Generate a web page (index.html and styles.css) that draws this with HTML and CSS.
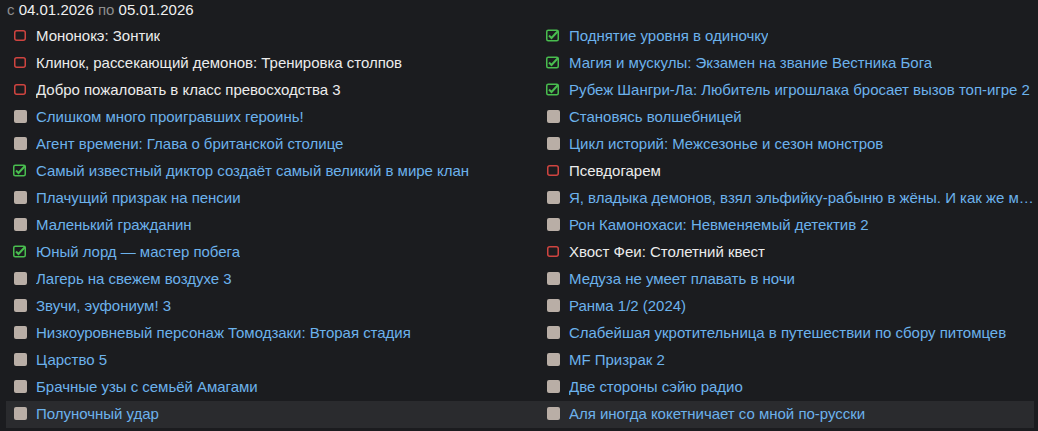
FILE: index.html
```html
<!DOCTYPE html>
<html lang="ru">
<head>
<meta charset="utf-8">
<link rel="stylesheet" href="styles.css">
</head>
<body>
<div class="page">
  <div class="range"><span class="muted">с</span> <span class="date">04.01.2026</span> <span class="muted">по</span> <span class="date">05.01.2026</span></div>
  <div class="list">
    <div class="row">
      <div class="cell"><span class="box red"><svg width="14" height="13" viewBox="0 0 14 13"><rect x="1.75" y="1.75" width="10.5" height="9.5" rx="2" fill="none" stroke="#cf4440" stroke-width="1.5"/></svg></span><span class="title white">Мононокэ: Зонтик</span></div>
      <div class="cell"><span class="box green"><svg width="14" height="13" viewBox="0 0 14 13"><rect x="0.75" y="1.25" width="11.5" height="10.5" rx="1.5" fill="none" stroke="#49bd4f" stroke-width="1.5"/><path d="M3 6.5l2.5 2.5L12 2" fill="none" stroke="#49bd4f" stroke-width="2"/></svg></span><span class="title">Поднятие уровня в одиночку</span></div>
    </div>
    <div class="row">
      <div class="cell"><span class="box red"><svg width="14" height="13" viewBox="0 0 14 13"><rect x="1.75" y="1.75" width="10.5" height="9.5" rx="2" fill="none" stroke="#cf4440" stroke-width="1.5"/></svg></span><span class="title white">Клинок, рассекающий демонов: Тренировка столпов</span></div>
      <div class="cell"><span class="box green"><svg width="14" height="13" viewBox="0 0 14 13"><rect x="0.75" y="1.25" width="11.5" height="10.5" rx="1.5" fill="none" stroke="#49bd4f" stroke-width="1.5"/><path d="M3 6.5l2.5 2.5L12 2" fill="none" stroke="#49bd4f" stroke-width="2"/></svg></span><span class="title">Магия и мускулы: Экзамен на звание Вестника Бога</span></div>
    </div>
    <div class="row">
      <div class="cell"><span class="box red"><svg width="14" height="13" viewBox="0 0 14 13"><rect x="1.75" y="1.75" width="10.5" height="9.5" rx="2" fill="none" stroke="#cf4440" stroke-width="1.5"/></svg></span><span class="title white">Добро пожаловать в класс превосходства 3</span></div>
      <div class="cell"><span class="box green"><svg width="14" height="13" viewBox="0 0 14 13"><rect x="0.75" y="1.25" width="11.5" height="10.5" rx="1.5" fill="none" stroke="#49bd4f" stroke-width="1.5"/><path d="M3 6.5l2.5 2.5L12 2" fill="none" stroke="#49bd4f" stroke-width="2"/></svg></span><span class="title">Рубеж Шангри-Ла: Любитель игрошлака бросает вызов топ-игре 2</span></div>
    </div>
    <div class="row">
      <div class="cell"><span class="box grey"></span><span class="title">Слишком много проигравших героинь!</span></div>
      <div class="cell"><span class="box grey"></span><span class="title">Становясь волшебницей</span></div>
    </div>
    <div class="row">
      <div class="cell"><span class="box grey"></span><span class="title">Агент времени: Глава о британской столице</span></div>
      <div class="cell"><span class="box grey"></span><span class="title">Цикл историй: Межсезонье и сезон монстров</span></div>
    </div>
    <div class="row">
      <div class="cell"><span class="box green"><svg width="14" height="13" viewBox="0 0 14 13"><rect x="0.75" y="1.25" width="11.5" height="10.5" rx="1.5" fill="none" stroke="#49bd4f" stroke-width="1.5"/><path d="M3 6.5l2.5 2.5L12 2" fill="none" stroke="#49bd4f" stroke-width="2"/></svg></span><span class="title">Самый известный диктор создаёт самый великий в мире клан</span></div>
      <div class="cell"><span class="box red"><svg width="14" height="13" viewBox="0 0 14 13"><rect x="1.75" y="1.75" width="10.5" height="9.5" rx="2" fill="none" stroke="#cf4440" stroke-width="1.5"/></svg></span><span class="title white">Псевдогарем</span></div>
    </div>
    <div class="row">
      <div class="cell"><span class="box grey"></span><span class="title">Плачущий призрак на пенсии</span></div>
      <div class="cell"><span class="box grey"></span><span class="title">Я, владыка демонов, взял эльфийку-рабыню в жёны. И как же мне её любить?</span></div>
    </div>
    <div class="row">
      <div class="cell"><span class="box grey"></span><span class="title">Маленький гражданин</span></div>
      <div class="cell"><span class="box grey"></span><span class="title">Рон Камонохаси: Невменяемый детектив 2</span></div>
    </div>
    <div class="row">
      <div class="cell"><span class="box green"><svg width="14" height="13" viewBox="0 0 14 13"><rect x="0.75" y="1.25" width="11.5" height="10.5" rx="1.5" fill="none" stroke="#49bd4f" stroke-width="1.5"/><path d="M3 6.5l2.5 2.5L12 2" fill="none" stroke="#49bd4f" stroke-width="2"/></svg></span><span class="title">Юный лорд — мастер побега</span></div>
      <div class="cell"><span class="box red"><svg width="14" height="13" viewBox="0 0 14 13"><rect x="1.75" y="1.75" width="10.5" height="9.5" rx="2" fill="none" stroke="#cf4440" stroke-width="1.5"/></svg></span><span class="title white">Хвост Феи: Столетний квест</span></div>
    </div>
    <div class="row">
      <div class="cell"><span class="box grey"></span><span class="title">Лагерь на свежем воздухе 3</span></div>
      <div class="cell"><span class="box grey"></span><span class="title">Медуза не умеет плавать в ночи</span></div>
    </div>
    <div class="row">
      <div class="cell"><span class="box grey"></span><span class="title">Звучи, эуфониум! 3</span></div>
      <div class="cell"><span class="box grey"></span><span class="title">Ранма 1/2 (2024)</span></div>
    </div>
    <div class="row">
      <div class="cell"><span class="box grey"></span><span class="title">Низкоуровневый персонаж Томодзаки: Вторая стадия</span></div>
      <div class="cell"><span class="box grey"></span><span class="title">Слабейшая укротительница в путешествии по сбору питомцев</span></div>
    </div>
    <div class="row">
      <div class="cell"><span class="box grey"></span><span class="title">Царство 5</span></div>
      <div class="cell"><span class="box grey"></span><span class="title">MF Призрак 2</span></div>
    </div>
    <div class="row">
      <div class="cell"><span class="box grey"></span><span class="title">Брачные узы с семьёй Амагами</span></div>
      <div class="cell"><span class="box grey"></span><span class="title">Две стороны сэйю радио</span></div>
    </div>
    <div class="row hover">
      <div class="cell"><span class="box grey"></span><span class="title">Полуночный удар</span></div>
      <div class="cell"><span class="box grey"></span><span class="title">Аля иногда кокетничает со мной по-русски</span></div>
    </div>
  </div>
</div>
</body>
</html>
```
FILE: styles.css
```css
html, body {
  margin: 0;
  padding: 0;
  background: #1b1c1f;
}
body {
  font-family: "Liberation Sans", Arial, sans-serif;
  font-size: 15px;
  color: #e6e6e6;
}
.page {
  padding: 0 4px 0 6px;
}
.range {
  height: 19px;
  line-height: 19px;
  margin-bottom: 4px;
  padding-left: 1px;
  font-size: 15px;
}
.muted {
  color: #8e8e8e;
}
.date {
  color: #f0f0f0;
}
.list {
  display: flex;
  flex-direction: column;
}
.row {
  display: grid;
  grid-template-columns: 533px 1fr;
  height: 27px;
}
.row.hover {
  background: #2a2b2e;
}
.cell {
  display: flex;
  align-items: center;
  padding-left: 7px;
  padding-right: 0;
  min-width: 0;
}
.box {
  flex: none;
  width: 14px;
  height: 13px;
  margin-right: 9px;
  display: flex;
  align-items: center;
  justify-content: flex-start;
  margin-top: -2px;
}
.box.grey::before {
  content: "";
  display: block;
  width: 13px;
  height: 13px;
  margin-left: 1px;
  background: #b9aea6;
  border-radius: 2px;
}
.box svg {
  display: block;
}
.title {
  color: #6cb2ec;
  line-height: 18px;
  white-space: nowrap;
  overflow: hidden;
  text-overflow: ellipsis;
  min-width: 0;
  margin-top: -1px;
  letter-spacing: -0.02px;
}
.title.white {
  color: #ececec;
}
```
